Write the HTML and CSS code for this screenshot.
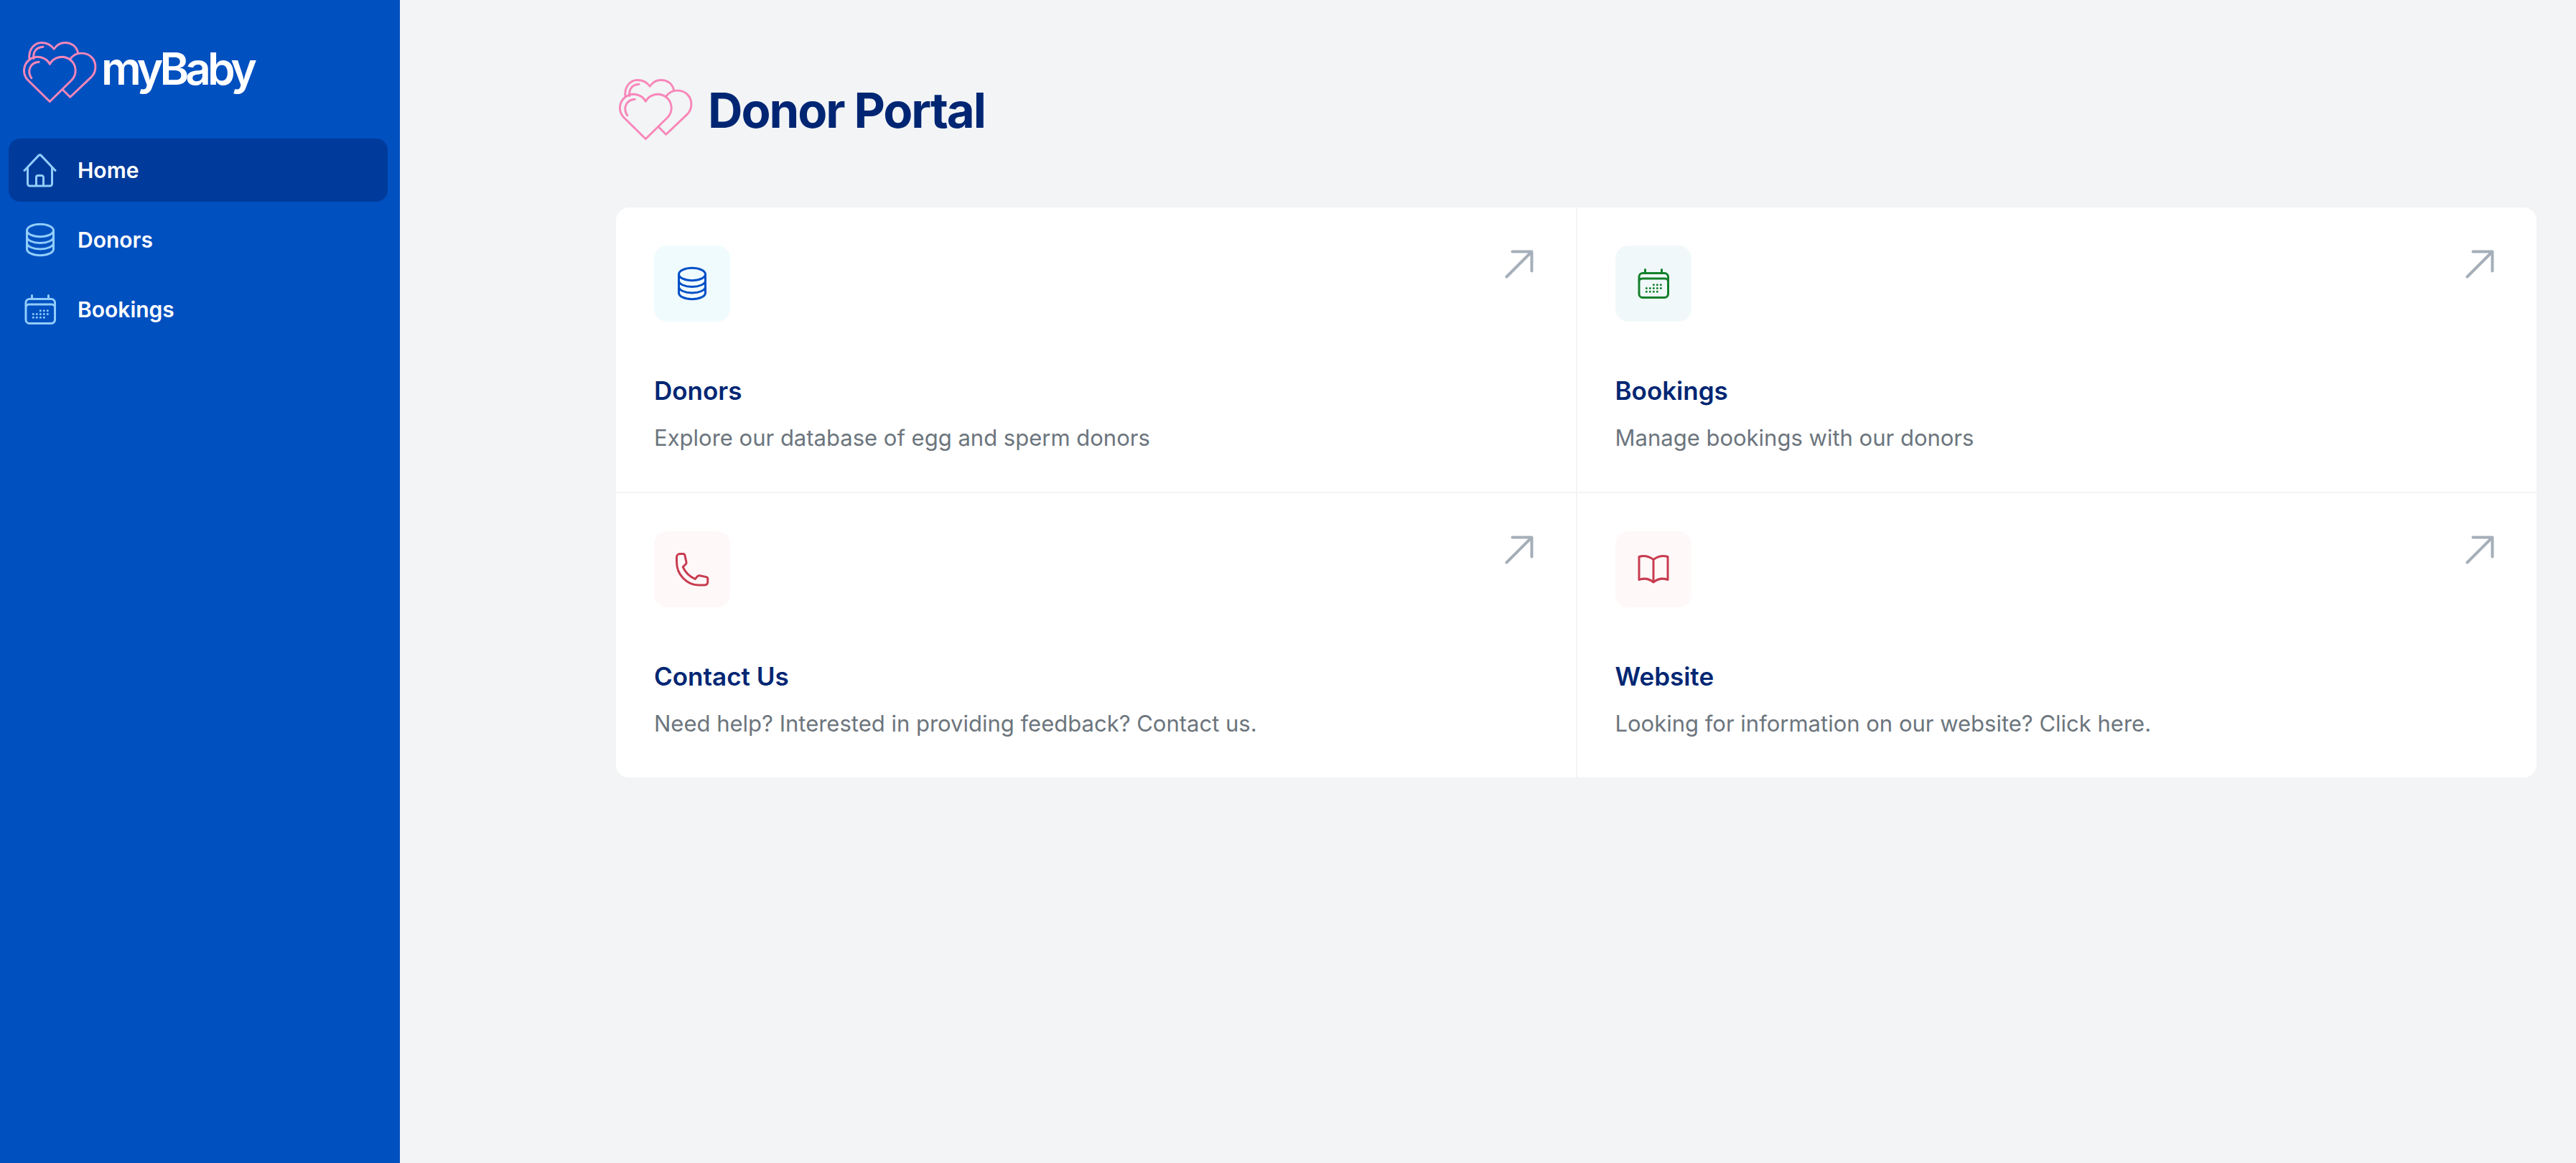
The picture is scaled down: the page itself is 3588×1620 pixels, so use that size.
FILE: index.html
```html
<!DOCTYPE html>
<html lang="en">
<head>
    <meta charset="utf-8">
    <title>myBaby - Donor Portal</title>
    <link rel="stylesheet" href="styles.css">
</head>
<body>
    <svg class="sprite" aria-hidden="true">
        <!-- hearts logo -->
        <symbol id="hearts" viewBox="12 17 106 90">
            <path d="M21 43.500C19 27 30 19.500 38 19.500C46 19.500 52 23 56 28.500C60 22.500 65 19.500 72 19.500C81 19.500 88 25 90 33.500"/>
            <path d="M40.500 25.500C31 26 26 32 27 42"/>
            <path d="M78.500 43.500C83 37 88 34.500 95 34.500C107 34.500 115 43 115 54C115 60 113 64.500 109 68.500L79 97L68.500 86.500"/>
            <path d="M50 50A19.500 19.500 0 1 0 19 73L50 103.500L81 73A19.500 19.500 0 1 0 50 50Z"/>
            <path d="M34.500 47C22 48 17 60 24 70"/>
        </symbol>
        <symbol id="home" viewBox="0 0 48 48">
            <path d="M2 24.500L21.800 3.600a2.400 2.400 0 0 1 3.500 0L45 24.500M6.500 20V43a3 3 0 0 0 3 3H37.500a3 3 0 0 0 3-3V20M18.500 46V34a2.500 2.500 0 0 1 2.500-2.500h5a2.500 2.500 0 0 1 2.500 2.500V46"/>
        </symbol>
        <symbol id="database" viewBox="0 0 48 48">
            <ellipse cx="24" cy="11" rx="18.500" ry="8.800"/>
            <path d="M5.500 11V37c0 4.800 8.300 8.800 18.500 8.800s18.500-4 18.500-8.800V11M5.500 20c0 4.800 8.300 8.400 18.500 8.400s18.500-3.600 18.500-8.400M5.500 28.500c0 4.800 8.300 8.400 18.500 8.400s18.500-3.600 18.500-8.400"/>
        </symbol>
        <symbol id="calendar" viewBox="0 0 48 48">
            <path d="M12.500 4.500V9M35.500 4.500V9M9 9.500H39.500a5 5 0 0 1 5 5V38.500a5 5 0 0 1-5 5H9a5 5 0 0 1-5-5V14.500a5 5 0 0 1 5-5ZM4 21.500a4.500 4.500 0 0 1 4.500-4.500H40a4.500 4.500 0 0 1 4.500 4.500"/>
            <path class="dots" d="M24.300 25.700h.010M29.300 25.700h.010M34.300 25.700h.010M14.300 30.500h.010M19.300 30.500h.010M24.300 30.500h.010M29.300 30.500h.010M34.300 30.500h.010M14.300 35.300h.010M19.300 35.300h.010M24.300 35.300h.010M29.300 35.300h.010"/>
        </symbol>
        <symbol id="phone" viewBox="0 0 48 48">
            <path d="M2.500 7C2.500 4.500 4.500 2.500 7 2.500H11.500C12.800 2.500 13.600 3.200 13.900 4.400L16 14C16.300 15.200 16 16 15.200 16.800L11.200 20.800C14.500 28 20.500 34 28.200 37.500L31.500 33.800C32.200 33 33.200 32.500 34.500 32.800L43.500 34.600C45 35 45.800 35.800 45.800 37.200V41C45.800 44 44 46 41 46H33C16 45.500 2.500 31 2.500 14Z"/>
        </symbol>
        <symbol id="book" viewBox="0 0 48 48">
            <path d="M24 10.500C18 6 11 4.500 4 6.500V38.500C11 36 18 37 24 42C30 37 37 36 44 38.500V6.500C37 4.500 30 6 24 10.500ZM24 10.500V42"/>
        </symbol>
        <symbol id="arrow" viewBox="0 0 40 40">
            <path d="M2.500 37.500L37 3M10.500 2.500H37.500V29.500"/>
        </symbol>
    </svg>

    <div id="container">
        <aside class="sidebar">
            <a class="brand" href="#">
                <svg class="hearts"><use href="#hearts"/></svg>
                <span>myBaby</span>
            </a>
            <nav class="menu">
                <a class="item active" href="#"><svg class="icon"><use href="#home"/></svg>Home</a>
                <a class="item" href="#"><svg class="icon"><use href="#database"/></svg>Donors</a>
                <a class="item" href="#"><svg class="icon"><use href="#calendar"/></svg>Bookings</a>
            </nav>
        </aside>

        <main class="content">
            <header class="title">
                <svg class="hearts"><use href="#hearts"/></svg>
                <h1>Donor Portal</h1>
            </header>

            <div class="cards">
                <a class="card" href="#">
                    <span class="badge blue"><svg class="icon"><use href="#database"/></svg></span>
                    <svg class="arrow"><use href="#arrow"/></svg>
                    <h2>Donors</h2>
                    <p>Explore our database of egg and sperm donors</p>
                </a>
                <a class="card" href="#">
                    <span class="badge green"><svg class="icon"><use href="#calendar"/></svg></span>
                    <svg class="arrow"><use href="#arrow"/></svg>
                    <h2>Bookings</h2>
                    <p>Manage bookings with our donors</p>
                </a>
                <a class="card" href="#">
                    <span class="badge red"><svg class="icon"><use href="#phone"/></svg></span>
                    <svg class="arrow"><use href="#arrow"/></svg>
                    <h2>Contact Us</h2>
                    <p>Need help? Interested in providing feedback? Contact us.</p>
                </a>
                <a class="card" href="#">
                    <span class="badge red"><svg class="icon"><use href="#book"/></svg></span>
                    <svg class="arrow"><use href="#arrow"/></svg>
                    <h2>Website</h2>
                    <p>Looking for information on our website? Click here.</p>
                </a>
            </div>
        </main>
    </div>
</body>
</html>
```
FILE: styles.css
```css
* {
    box-sizing: border-box;
}
body {
    margin: 0;
    font-family: Inter, sans-serif;
    background-color: #f2f4f6;
}
a {
    color: inherit;
    text-decoration: none;
}
h1, h2, p {
    margin: 0;
}
svg {
    display: block;
    flex-shrink: 0;
    fill: none;
    stroke: currentColor;
    stroke-width: 3;
    stroke-linecap: round;
    stroke-linejoin: round;
}
.sprite {
    position: absolute;
    width: 0;
    height: 0;
}
#container {
    display: flex;
    min-height: 100vh;
}

/* sidebar */
.sidebar {
    width: 557px;
    flex-shrink: 0;
    padding: 56px 17px 0 12px;
    background-color: #0050c0;
    color: white;
}
.brand {
    display: flex;
    align-items: center;
    gap: 5px;
    height: 90px;
    margin: 0 0 47px 20px;
    font-size: 62px;
    font-weight: 600;
    line-height: 80px;
    letter-spacing: -5px;
}
.brand span {
    padding-bottom: 10px;
}
.hearts {
    width: 104px;
    height: 88px;
    color: #f887b9;
}
.menu {
    display: flex;
    flex-direction: column;
    gap: 9px;
}
.item {
    display: flex;
    align-items: center;
    gap: 28px;
    height: 88px;
    padding: 0 20px;
    border-radius: 16px;
    font-size: 30px;
    font-weight: 600;
}
.item .icon {
    color: #90cdfa;
}
.active {
    background-color: #003a9b;
}
.icon {
    width: 48px;
    height: 48px;
}

/* main area */
.content {
    flex: 1;
    margin-left: 20px;
    padding: 107px 55px 0 281px;
}
.title {
    display: flex;
    align-items: center;
    gap: 20px;
    height: 92px;
    margin-bottom: 90px;
    padding-left: 4px;
}
h1 {
    color: #002673;
    font-size: 67px;
    font-weight: 700;
    letter-spacing: -2px;
}
.cards {
    display: grid;
    grid-template-columns: 1fr 1fr;
    gap: 2px;
    border-radius: 18px;
    overflow: hidden;
}
.card {
    display: grid;
    grid-template-columns: 1fr auto;
    padding: 53px;
    background-color: white;
}
.badge {
    display: flex;
    align-items: center;
    justify-content: center;
    width: 106px;
    height: 106px;
    margin-bottom: 70px;
    border-radius: 18px;
}
.blue {
    background-color: #f0fbfd;
    color: #0050c8;
}
.green {
    background-color: #f1f8f9;
    color: #15802c;
}
.red {
    background-color: #fff8f9;
    color: #c83c50;
}
.arrow {
    width: 40px;
    height: 40px;
    margin: 6px 6px 0 0;
    color: #a5afb9;
    stroke-width: 4;
}
h2 {
    grid-column: 1 / 3;
    margin-bottom: 17px;
    color: #002673;
    font-size: 35px;
    font-weight: 600;
    line-height: 53px;
}
p {
    grid-column: 1 / 3;
    color: #6c757d;
    font-size: 31px;
    line-height: 44px;
}
```
